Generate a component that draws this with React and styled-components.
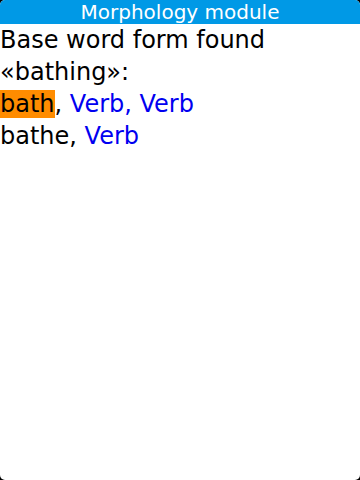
import React from "react";
import styled, { createGlobalStyle } from "styled-components";

const Global = createGlobalStyle`
  html, body { margin: 0; padding: 0; background: #000; }
  body { font-family: "DejaVu Sans", sans-serif; }
`;

const Screen = styled.div`
  width: 360px;
  height: 480px;
  background: #fff;
  border-radius: 5px;
  overflow: hidden;
  display: flex;
  flex-direction: column;
`;

const TitleBar = styled.div`
  height: 24px;
  background: #0099e6;
  color: #fff;
  font-size: 20px;
  line-height: 24px;
  text-align: center;
  flex-shrink: 0;
`;

const Content = styled.div`
  font-size: 24px;
  line-height: 32px;
  color: #000;
`;

const Line = styled.div``;

const Highlight = styled.span`
  background: #ff8c00;
`;

const Tag = styled.span`
  color: #0000f0;
`;

export default function App() {
  return (
    <>
      <Global />
      <Screen>
        <TitleBar>Morphology module</TitleBar>
        <Content>
          <Line>Base word form found «bathing»:</Line>
          <Line>
            <Highlight>bath</Highlight>, <Tag>Verb, Verb</Tag>
          </Line>
          <Line>
            bathe, <Tag>Verb</Tag>
          </Line>
        </Content>
      </Screen>
    </>
  );
}
